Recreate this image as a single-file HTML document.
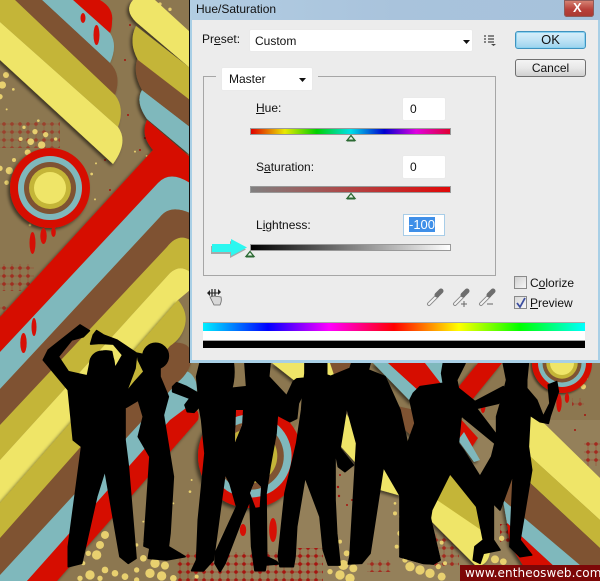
<!DOCTYPE html>
<html><head><meta charset="utf-8"><style>
html,body{margin:0;padding:0;background:#8a7550}
#r{position:relative;width:600px;height:581px;overflow:hidden;font-family:"Liberation Sans",sans-serif;font-size:12px;color:#111}
#r>svg{position:absolute;left:0;top:0}
.a{position:absolute}
.t{position:absolute;white-space:nowrap;line-height:14px}
.f{position:absolute;background:#fff;border-radius:1px;box-shadow:0 0 1px #ddd}
.s{position:absolute;left:250px;width:199px;height:5px;border:1px solid #999}
.u{text-decoration:underline}
</style></head><body><div id="r">
<svg width="600" height="581" viewBox="0 0 600 581">
<defs>
<filter id="sh" x="-20%" y="-20%" width="140%" height="140%"><feDropShadow dx="-2" dy="2" stdDeviation="1.5" flood-color="#000" flood-opacity=".55"/></filter>
<pattern id="ht" width="8" height="8" patternUnits="userSpaceOnUse"><circle cx="4" cy="4" r="1.800" fill="#a5140f"/><rect x="3.600" width=".8" height="8" fill="#a5140f" opacity=".45"/><rect y="3.600" width="8" height=".8" fill="#a5140f" opacity=".45"/></pattern>
<g id="ring"><circle r="40" fill="#d60f05"/><circle r="32" fill="#7fb8bc"/><circle r="26" fill="#7f5232"/><circle r="21" fill="#c4b538"/><circle r="16" fill="#efe567"/></g>
<clipPath id="w"><path d="M236 410 L243 410 L242 425 L235 442Z M255 481 L250 493 L259 517 L261 487Z"/></clipPath>
</defs>
<rect width="600" height="581" fill="#8c7750"/>
<path d="M300 420 L600 420 L600 581 L190 581Z" fill="#94805a"/>
<g>
<rect x="0" y="122" width="60" height="26" fill="url(#ht)" opacity=".55"/>
<rect x="0" y="264" width="34" height="27" fill="url(#ht)" opacity=".75"/>
<rect x="0" y="306" width="8" height="12" fill="url(#ht)" opacity=".7"/>
<rect x="177" y="552" width="126" height="29" fill="url(#ht)"/>
<rect x="293" y="548" width="30" height="33" fill="url(#ht)"/>
<rect x="367" y="560" width="24" height="12" fill="url(#ht)" opacity=".8"/>
<rect x="433" y="534" width="26" height="32" fill="url(#ht)" opacity=".8"/>
<rect x="584" y="442" width="16" height="24" fill="url(#ht)" opacity=".8"/>
<rect x="500" y="524" width="12" height="18" fill="url(#ht)"/>
<rect x="572" y="398" width="12" height="8" fill="url(#ht)" opacity=".7"/>
</g>
<g fill="#a5140f"><circle cx="130" cy="25" r="1"/><circle cx="125" cy="60" r="1"/><circle cx="135" cy="45" r="1"/><circle cx="128" cy="115" r="1"/><circle cx="140" cy="150" r="1"/><circle cx="145" cy="138" r="1"/><circle cx="105" cy="160" r="1"/><circle cx="110" cy="190" r="1"/><circle cx="338" cy="487" r="1.200"/><circle cx="339" cy="496" r="1.200"/><circle cx="352" cy="500" r="1"/><circle cx="347" cy="505" r="1"/><circle cx="340" cy="475" r="1"/><circle cx="585" cy="415" r="1"/><circle cx="575" cy="430" r="1"/></g>
<g fill="#e8d06f" transform="scale(.3333)">
<circle cx="18" cy="225" r="9"/><circle cx="7" cy="255" r="11"/><circle cx="0" cy="290" r="8"/><circle cx="105" cy="395" r="8"/><circle cx="137" cy="404" r="8"/><circle cx="92" cy="425" r="10"/><circle cx="125" cy="435" r="11"/><circle cx="62" cy="417" r="6"/><circle cx="167" cy="417" r="5"/><circle cx="83" cy="457" r="9"/><circle cx="42" cy="480" r="6"/><circle cx="28" cy="512" r="11"/><circle cx="0" cy="505" r="8"/><circle cx="20" cy="548" r="7"/><circle cx="72" cy="382" r="5"/><circle cx="40" cy="268" r="4"/><circle cx="285" cy="598" r="3"/><circle cx="275" cy="522" r="4"/><circle cx="288" cy="490" r="3"/><circle cx="115" cy="362" r="4"/><circle cx="90" cy="675" r="4"/><circle cx="20" cy="328" r="3"/><circle cx="510" cy="28" r="5"/><circle cx="480" cy="12" r="5"/><circle cx="440" cy="468" r="3"/><circle cx="405" cy="455" r="3"/>
</g>
<g fill="#e8d06f" transform="translate(0,300) scale(.3333)">
<circle cx="290" cy="765" r="14"/><circle cx="300" cy="735" r="12"/><circle cx="315" cy="705" r="12"/><circle cx="265" cy="760" r="8"/><circle cx="250" cy="790" r="6"/><circle cx="270" cy="825" r="14"/><circle cx="240" cy="835" r="8"/><circle cx="315" cy="810" r="10"/><circle cx="345" cy="820" r="10"/><circle cx="375" cy="830" r="10"/><circle cx="410" cy="810" r="8"/><circle cx="430" cy="775" r="10"/><circle cx="465" cy="790" r="14"/><circle cx="495" cy="797" r="12"/><circle cx="450" cy="820" r="14"/><circle cx="485" cy="828" r="14"/><circle cx="520" cy="835" r="10"/><circle cx="410" cy="840" r="8"/><circle cx="300" cy="835" r="8"/><circle cx="590" cy="830" r="6"/><circle cx="655" cy="635" r="6"/><circle cx="660" cy="605" r="4"/><circle cx="640" cy="670" r="4"/><circle cx="570" cy="575" r="4"/><circle cx="575" cy="540" r="3"/><circle cx="520" cy="610" r="3"/><circle cx="430" cy="665" r="3"/><circle cx="410" cy="735" r="5"/><circle cx="435" cy="725" r="5"/>
</g>
<g fill="#e8d06f" transform="translate(300,350) scale(.3333)">
<circle cx="130" cy="645" r="15"/><circle cx="90" cy="665" r="8"/><circle cx="120" cy="675" r="14"/><circle cx="160" cy="655" r="12"/><circle cx="140" cy="610" r="9"/><circle cx="150" cy="685" r="14"/><circle cx="330" cy="650" r="14"/><circle cx="315" cy="630" r="8"/><circle cx="350" cy="625" r="9"/><circle cx="360" cy="660" r="14"/><circle cx="390" cy="670" r="14"/><circle cx="425" cy="680" r="12"/><circle cx="415" cy="650" r="8"/><circle cx="585" cy="628" r="12"/><circle cx="610" cy="635" r="10"/><circle cx="605" cy="565" r="8"/><circle cx="300" cy="550" r="8"/><circle cx="305" cy="590" r="8"/><circle cx="290" cy="590" r="6"/><circle cx="305" cy="500" r="8"/><circle cx="285" cy="490" r="6"/><circle cx="285" cy="460" r="4"/><circle cx="425" cy="578" r="6"/><circle cx="435" cy="640" r="6"/><circle cx="850" cy="110" r="8"/><circle cx="860" cy="85" r="4"/><circle cx="120" cy="575" r="6"/>
</g>
<g filter="url(#sh)">
<path d="M73 0 L100 0 Q114 8 112 22 Q112 28 110 33 Z" fill="#d60f05"/>
<path d="M42 0 L73 0 L110 33 Q118 45 110 63 Z" fill="#7fb8bc"/>
<path d="M15 0 L42 0 L110 63 Q122 75 115 95 Z" fill="#7f5232"/>
<path d="M0 0 L15 0 L115 95 Q125 108 118 127 L0 22Z" fill="#c4b538"/>
<path d="M0 22 L118 127 Q129 142 113 164 L0 60Z" fill="#efe567"/>
</g>
<g filter="url(#sh)">
<path d="M147 120 L190 157 L190 183 Q170 170 158 183 L0 352 L0 317 L153 150 Q140 135 147 120Z" fill="#d60f05"/>
<path d="M142 90 L190 127 L190 155 L147 119 Q135 102 142 90Z" fill="#7fb8bc"/>
<path d="M138 57 L190 100 L190 127 L142 90 Q132 72 138 57Z" fill="#7f5232"/>
<path d="M136 26 L190 68 L190 100 L138 60 Q128 42 136 26Z" fill="#c4b538"/>
<path d="M133 0 L155 0 L190 32 L190 68 L136 22 Q124 10 133 0Z" fill="#efe567"/>
</g>
<path d="M158 183 Q170 170 190 183 L190 213 Q170 204 160 217 L0 389 L0 352Z" fill="#7fb8bc"/>
<path d="M160 217 Q170 204 190 213 L190 240 Q178 233 167 247 L0 425 L0 389Z" fill="#7f5232"/>
<path d="M167 247 Q178 233 190 240 L190 272 Q180 264 170 273 L0 460 L0 425Z" fill="#c4b538"/>
<path d="M170 273 Q180 264 190 272 L190 290 L178 300 L0 503 L0 460Z" fill="#efe567"/>
<g filter="url(#sh)">
<path d="M172 379 Q188 362 196 382 Q199 395 192 408 L170 422 L27 581 L0 581 L0 563Z" fill="#7fb8bc"/>
<path d="M190 405 Q201 410 198 420 L170 452 L57 581 L27 581 L170 420Z" fill="#d60f05"/>
<path d="M170 343 Q192 340 192 358 Q190 372 178 382 L0 575 L0 538Z" fill="#7f5232"/>
<path d="M178 300 Q188 312 185 325 Q182 338 170 346 L0 538 L0 503Z" fill="#c4b538"/>
</g>
<use href="#ring" transform="translate(50,188)" filter="url(#sh)"/>
<g filter="url(#sh)">
<path d="M272 363 L316 363 L316 390 L300 385Z" fill="#efe567"/>
<path d="M327 363 L352 363 L345 372 L335 378Z" fill="#7f5232"/>
<path d="M312 363 L330 363 L335 378 L318 385Z" fill="#efe567"/>
<path d="M373 363 L388 363 L420 392 L412 403Z" fill="#7fb8bc"/>
<path d="M388 363 L425 363 L445 388 L420 392Z" fill="#d60f05"/>
<path d="M425 363 L447 363 L442 385Z" fill="#7fb8bc"/>
<path d="M478 363 L502 363 L472 400 L456 390Z" fill="#d60f05"/>
<path d="M392 405 L415 410 L428 450 L405 430Z" fill="#7f5232"/>
<path d="M340 405 L405 497 L380 490 L335 440Z" fill="#efe567"/>
<path d="M408 440 L428 457 L418 490 L400 470Z" fill="#c4b538"/>
<path d="M458 416 L478 438 L470 450 L454 436Z" fill="#d60f05"/>
<path d="M464 432 L480 460 L474 462 L458 440Z" fill="#7fb8bc"/>
<path d="M445 470 L480 497 L490 515 L440 480Z" fill="#7f5232"/>
<path d="M450 475 L487 515 L484 535 L435 500Z" fill="#c4b538"/>
<path d="M434 498 L484 532 L490 552 Q488 566 476 566 L430 520Z" fill="#efe567"/>
</g>
<use href="#ring" transform="translate(250,456) scale(1.300)" filter="url(#sh)"/>
<g filter="url(#sh)">
<path d="M510 390 L600 478 L600 520 L510 438Z" fill="#efe567"/>
<path d="M510 438 L600 520 L600 548 L510 464Z" fill="#c4b538"/>
<path d="M505 460 L600 548 L600 582 L503 500Z" fill="#7f5232"/>
<path d="M503 500 L600 582 L570 581 L507 523Z" fill="#7fb8bc"/>
<path d="M507 523 L570 581 L533 581 L510 545Z" fill="#d60f05"/>
</g>
<use href="#ring" transform="translate(562,363) scale(.75)" filter="url(#sh)"/>
<g fill="#d60f05">
<ellipse cx="32.500" cy="243" rx="3" ry="11"/><ellipse cx="43.500" cy="236" rx="3.200" ry="8"/><ellipse cx="53.500" cy="232" rx="2.300" ry="5"/>
<ellipse cx="83" cy="18" rx="2.500" ry="5"/><ellipse cx="96.500" cy="35" rx="3" ry="10"/>
<ellipse cx="23.500" cy="343" rx="3.200" ry="10"/><ellipse cx="34" cy="327" rx="2.500" ry="9"/>
<ellipse cx="150" cy="490" rx="2.500" ry="10"/><ellipse cx="155" cy="481" rx="2" ry="3"/>
<ellipse cx="243" cy="530" rx="3.200" ry="6"/><ellipse cx="273" cy="530" rx="3.800" ry="12"/>
<ellipse cx="559" cy="403" rx="2.700" ry="9"/><ellipse cx="567" cy="398" rx="2.200" ry="5"/><ellipse cx="483" cy="406" rx="2.500" ry="7"/>
</g>
<g fill="#000" stroke="#000" stroke-width="5" stroke-linejoin="round" transform="translate(0,300) scale(.3333)">
<path d="M240 75 L268 92 L250 110 L215 120 L175 170 L205 215 L262 228 L272 180 Q295 145 335 155 L345 205 L368 165 L340 132 L300 130 L272 132 L280 105 L290 92 L310 105 L350 120 L410 160 L405 205 L375 285 L375 420 L385 500 L408 775 L385 790 L360 770 L315 510 L290 590 L245 790 L205 800 L205 740 L245 440 L220 420 L205 270 L130 180 L145 150 L215 95Z"/>
<circle cx="306" cy="190" r="36"/>
<path d="M480 200 L480 230 L505 290 L490 345 L520 530 L510 700 L505 740 L555 770 L500 780 L445 775 L450 745 L432 738 L450 470 L415 410 L430 350 L415 300 L378 322 L362 298 L405 245 L432 215 L415 180 L412 160 L435 165Z"/>
<circle cx="467" cy="168" r="38"/>
</g>
<g fill="#000" stroke="#000" stroke-width="5" stroke-linejoin="round" transform="translate(170,360) scale(.3333)">
<path d="M90 10 L190 10 Q195 50 185 85 L230 80 L225 10 L300 10 L296 50 L350 108 L370 65 L380 57 L400 55 L408 70 L405 90 L385 130 L380 175 L360 185 L322 165 L318 220 L300 320 L288 400 L290 590 L320 605 L325 612 L288 615 L285 632 L255 632 L245 560 L240 420 L215 480 L165 610 L150 635 L135 610 L138 575 L200 440 L180 370 L165 340 L130 600 L100 633 L65 632 L80 600 L85 480 L105 280 L95 180 L88 140 L72 157 L52 155 L45 135 L60 115 L8 95 L8 80 L20 68 L50 80 L85 100 L80 50 Z"/>
</g>
<g clip-path="url(#w)"><use href="#ring" transform="translate(250,456) scale(1.300)"/></g>
<g fill="#000" stroke="#000" stroke-width="5" stroke-linejoin="round" transform="translate(290,360) scale(.3333)">
<path d="M45 10 L110 10 L110 45 L125 50 L170 140 L150 265 L190 315 L165 335 L145 320 L135 270 L135 420 L140 520 L150 615 L115 615 L100 570 L90 470 L45 350 L20 500 L15 590 L10 620 L-30 620 L-35 590 L-15 400 L20 250 L35 150 L40 80 L45 40Z"/>
<path d="M120 50 L180 25 L185 10 L240 10 L235 30 L285 50 L330 150 L350 240 L385 385 L420 470 L450 600 L430 612 L400 610 L330 590 L350 520 L335 500 L335 415 L280 320 L240 580 L215 610 L175 612 L180 590 L200 250 L170 140 Z"/>
</g>
<g fill="#000" stroke="#000" stroke-width="5" stroke-linejoin="round" transform="translate(400,360) scale(.3333)">
<path d="M130 10 L195 10 L170 60 L175 85 L225 125 L310 80 L320 110 L295 130 L230 145 L195 165 L183 172 L175 250 L190 270 L240 350 L280 430 L280 540 L300 570 L250 580 L240 610 L220 600 L225 560 L250 540 L230 440 L150 340 L95 450 L90 480 L120 600 L100 612 L70 610 L0 590 L0 300 L25 245 L45 190 L30 120 L40 100 L60 80 L130 70 L125 40Z"/>
<path d="M85 290 L150 340 L175 250 L60 200Z"/>
<path d="M310 10 L385 10 L380 60 L380 85 L410 120 L430 170 L450 130 L445 75 L470 65 L475 95 L450 170 L445 190 L420 185 L390 165 L385 260 L395 330 L360 540 L395 585 L360 590 L330 560 L340 340 L300 450 L280 430 L240 350 L275 290 L285 250 L190 172 L225 140 L290 225 L290 170 L310 100 L320 60Z"/>
</g>

<div class="a" style="left:189px;top:0;width:1px;height:363px;background:#111"></div>
<div class="a" style="left:190px;top:0;width:410px;height:363px;background:#a8cfe6"></div>
<div class="a" style="left:190px;top:0;width:410px;height:20px;background:linear-gradient(90deg,#b2cde2,#a9c3dc 50%,#a6c2db)"></div>
<div class="a" style="left:192px;top:20px;width:406px;height:340px;background:#ececec"></div>
<div class="t" style="left:196px;top:2px">Hue/Saturation</div>
<div class="a" style="left:564px;top:0;width:30px;height:17px;background:linear-gradient(#d88878,#b8413a 55%,#a83830);border-radius:0 0 3px 3px;box-shadow:0 0 0 1px #8e5a58 inset"></div>
<div class="t" style="left:573px;top:1px;color:#fff;font-weight:bold;font-size:13px">X</div>

<div class="t" style="left:202px;top:32px">Pr<span class="u">e</span>set:</div>
<div class="f" style="left:250px;top:30px;width:222px;height:21px"></div>
<div class="t" style="left:255px;top:34px">Custom</div>
<svg class="a" style="left:462px;top:39px" width="10" height="6"><path d="M1 1H8L4.500 5Z" fill="#111"/></svg>
<svg class="a" style="left:483px;top:35px" width="14" height="11"><path d="M1 1H3M1 4H3M1 7H3M5 1H11M5 4H11M5 7H11" stroke="#444" stroke-width="1.200"/><path d="M8 9H13L10.500 11Z" fill="#444"/></svg>
<div class="a" style="left:515px;top:31px;width:69px;height:16px;border:1px solid #3f93bf;border-radius:3px;background:linear-gradient(#d8effa,#bfe3f5 50%,#9cd3ee);box-shadow:0 0 0 1px #8cd2f0 inset"></div>
<div class="t" style="left:515px;top:33px;width:71px;text-align:center;font-size:13px">OK</div>
<div class="a" style="left:515px;top:59px;width:69px;height:16px;border:1px solid #707070;border-radius:3px;background:linear-gradient(#f4f4f4,#e8e8e8 50%,#cfcfcf)"></div>
<div class="t" style="left:515px;top:61px;width:71px;text-align:center">Cancel</div>

<div class="a" style="left:203px;top:76px;width:291px;height:198px;border:1px solid #a6a6a6"></div>
<div class="a" style="left:216px;top:70px;width:102px;height:12px;background:#ececec"></div>
<div class="f" style="left:222px;top:68px;width:90px;height:22px"></div>
<div class="t" style="left:229px;top:72px">Master</div>
<svg class="a" style="left:298px;top:77px" width="10" height="6"><path d="M1 1H8L4.500 5Z" fill="#111"/></svg>

<div class="t" style="left:256px;top:101px"><span class="u">H</span>ue:</div>
<div class="f" style="left:403px;top:98px;width:42px;height:22px"></div>
<div class="t" style="left:410px;top:102px">0</div>
<div class="s" style="top:128px;background:linear-gradient(90deg,#e00000,#e8e800 17%,#00d000 33%,#00e0e8 50%,#0000d0 67%,#e000e0 83%,#e00030)"></div>

<div class="t" style="left:256px;top:160px">S<span class="u">a</span>turation:</div>
<div class="f" style="left:403px;top:156px;width:42px;height:22px"></div>
<div class="t" style="left:410px;top:160px">0</div>
<div class="s" style="top:186px;background:linear-gradient(90deg,#808080,#e00808)"></div>

<div class="t" style="left:256px;top:218px">L<span class="u">i</span>ghtness:</div>
<div class="a" style="left:403px;top:214px;width:40px;height:20px;background:#fff;border:1px solid #a8cde8"></div>
<div class="a" style="left:409px;top:217px;width:26px;height:15px;background:#3f8fe8"></div>
<div class="t" style="left:409px;top:218px;color:#fff;font-size:13px">-100</div>
<div class="s" style="top:244px;background:linear-gradient(90deg,#000,#fff)"></div>

<svg class="a" style="left:205px;top:130px" width="260" height="135">
<g stroke="#2c6a33" fill="#e8f3e8" stroke-width="1.300"><path d="M146 5.500L150 10.500H142Z"/><path d="M146 63.500L150 68.500H142Z"/><path d="M45 121.500L49 126.500H41Z"/></g>
<path d="M142 10.500H150M142 68.500H150M41 126.500H49" stroke="#2c6a33" stroke-width="2"/>
<path d="M7 114H26V109L42 117.500L26 126V122H7Z" fill="#444" opacity=".4" transform="translate(-1,2)"/>
<path d="M7 114H26V109L42 117.500L26 126V122H7Z" fill="#2cf7f0"/>
</svg>

<div class="a" style="left:514px;top:276px;width:11px;height:11px;border:1px solid #8a8a8a;background:linear-gradient(135deg,#d0d0d0,#f6f6f6)"></div>
<div class="t" style="left:530px;top:276px">C<span class="u">o</span>lorize</div>
<div class="a" style="left:514px;top:296px;width:11px;height:11px;border:1px solid #8a8a8a;background:linear-gradient(135deg,#d8d8d8,#f6f6f6)"></div>
<svg class="a" style="left:515px;top:297px" width="12" height="12"><path d="M2 6L5 10L10 1" fill="none" stroke="#3c4ea0" stroke-width="1.800"/></svg>
<div class="t" style="left:530px;top:296px"><span class="u">P</span>review</div>

<svg class="a" style="left:205px;top:287px" width="18" height="20">
<path d="M2 6L5 3V9ZM16 5L13 2V8Z" fill="#222"/><path d="M4 6H14" stroke="#222"/><path d="M7 2V10M10 2V10" stroke="#222" stroke-width="1.200"/>
<path d="M5 10L9 18H15Q17 14 16 10L9 9Z" fill="#d8d8d8" stroke="#666" stroke-width=".8"/>
</svg>
<svg class="a" style="left:426px;top:288px" width="72" height="19">
<g stroke-linecap="round"><path d="M3 16L11 8" stroke="#8a8a8a" stroke-width="4"/><path d="M3 16L11 8" stroke="#f4f4f4" stroke-width="2"/><path d="M11 7L15 3" stroke="#6e6e6e" stroke-width="5"/></g>
<g stroke-linecap="round" transform="translate(26,0)"><path d="M3 16L11 8" stroke="#8a8a8a" stroke-width="4"/><path d="M3 16L11 8" stroke="#f4f4f4" stroke-width="2"/><path d="M11 7L15 3" stroke="#6e6e6e" stroke-width="5"/><path d="M9 16H15M12 13V19" stroke="#666" stroke-linecap="butt"/></g>
<g stroke-linecap="round" transform="translate(52,0)"><path d="M3 16L11 8" stroke="#8a8a8a" stroke-width="4"/><path d="M3 16L11 8" stroke="#f4f4f4" stroke-width="2"/><path d="M11 7L15 3" stroke="#6e6e6e" stroke-width="5"/><path d="M9 16H15" stroke="#666" stroke-linecap="butt"/></g>
</svg>

<div class="a" style="left:203px;top:323px;width:382px;height:8px;background:linear-gradient(90deg,#00f0ff,#0000ff 17%,#ff00ff 33%,#ff0000 50%,#ffff00 67%,#00ff00 83%,#00ffff);box-shadow:0 -1px 0 #aaa"></div>
<div class="a" style="left:203px;top:331px;width:382px;height:9px;background:#fff"></div>
<div class="a" style="left:203px;top:341px;width:382px;height:7px;background:#000;box-shadow:0 -1px 0 #aaa"></div>

<div class="a" style="left:460px;top:565px;width:140px;height:16px;background:#7d0707"></div>
<div class="t" style="left:465px;top:566px;color:#fff;font-family:'DejaVu Sans',sans-serif;font-size:12px;letter-spacing:.1px">www.entheosweb.com</div>
</div></body></html>
